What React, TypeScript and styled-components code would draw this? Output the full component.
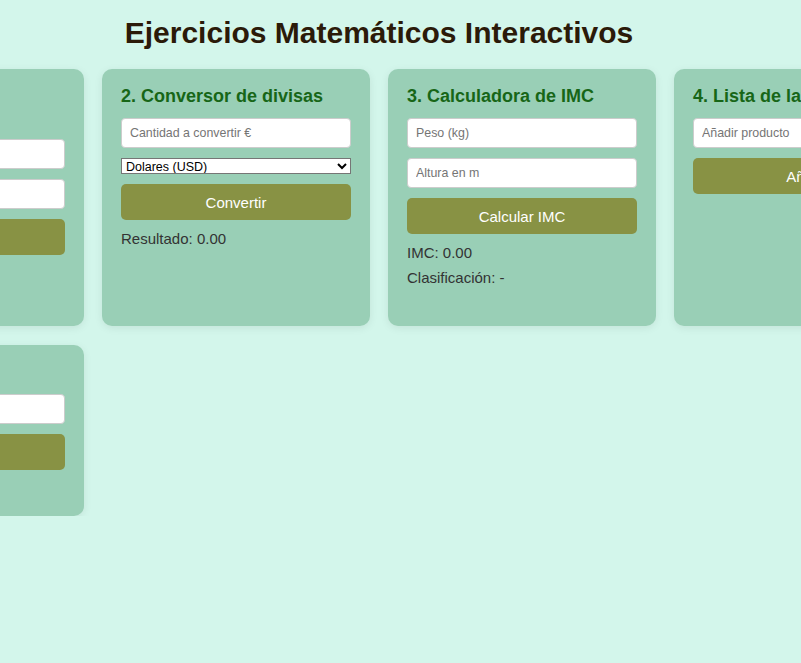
import * as React from 'react'
import styled, { createGlobalStyle } from 'styled-components'

const GlobalStyle = createGlobalStyle`
  body {
    margin: 0;
    background: #d3f6eb;
    font-family: "Liberation Sans", Arial, sans-serif;
    overflow: hidden;
  }
`

const App: React.FC = () => (
  <StyledPage>
    <GlobalStyle />
    <StyledHeading>Ejercicios Matemáticos Interactivos</StyledHeading>
    <StyledGrid>
      <StyledCard $minHeight={257}>
        <StyledCardTitle>1. Calculadora de porcentajes</StyledCardTitle>
        <StyledInput placeholder="Número" />
        <StyledInput placeholder="Porcentaje %" />
        <StyledButton>Calcular</StyledButton>
        <StyledResult>Resultado: 0.00</StyledResult>
      </StyledCard>

      <StyledCard>
        <StyledCardTitle>2. Conversor de divisas</StyledCardTitle>
        <StyledInput placeholder="Cantidad a convertir €" />
        <StyledSelect defaultValue="usd">
          <option value="usd">Dolares (USD)</option>
          <option value="gbp">Libras (GBP)</option>
          <option value="jpy">Yenes (JPY)</option>
        </StyledSelect>
        <StyledButton>Convertir</StyledButton>
        <StyledResult>Resultado: 0.00</StyledResult>
      </StyledCard>

      <StyledCard>
        <StyledCardTitle>3. Calculadora de IMC</StyledCardTitle>
        <StyledInput placeholder="Peso (kg)" />
        <StyledInput placeholder="Altura en m" />
        <StyledButton>Calcular IMC</StyledButton>
        <StyledResult>IMC: 0.00</StyledResult>
        <StyledResult>Clasificación: -</StyledResult>
      </StyledCard>

      <StyledCard>
        <StyledCardTitle>4. Lista de la compra</StyledCardTitle>
        <StyledInput placeholder="Añadir producto" />
        <StyledButton>Añadir</StyledButton>
      </StyledCard>

      <StyledCard $minHeight={171}>
        <StyledCardTitle>5. Par o impar</StyledCardTitle>
        <StyledInput placeholder="Número" />
        <StyledButton>Comprobar</StyledButton>
      </StyledCard>
    </StyledGrid>
  </StyledPage>
)

const StyledPage = styled.div`
  width: 758px;
  display: flex;
  flex-direction: column;
  align-items: center;
`

const StyledHeading = styled.h1`
  margin: 16px 0 18.5px;
  font-size: 30px;
  font-weight: bold;
  color: #2b1a09;
  white-space: nowrap;
`

const StyledGrid = styled.div`
  display: grid;
  grid-template-columns: repeat(4, 268px);
  column-gap: 18px;
  row-gap: 19px;
  align-items: stretch;
`

const StyledCard = styled.div<{ $minHeight?: number }>`
  box-sizing: border-box;
  min-height: ${props => (props.$minHeight ? `${props.$minHeight}px` : 'auto')};
  padding: 17.5px 19px 19px;
  background: #99cfb6;
  border-radius: 10px;
  box-shadow: 0 2px 8px rgba(0, 0, 0, 0.08);
`

const StyledCardTitle = styled.h3`
  margin: 0 0 11px;
  font-size: 18px;
  font-weight: bold;
  color: #176617;
`

const StyledInput = styled.input`
  display: block;
  box-sizing: border-box;
  width: 100%;
  height: 30px;
  margin: 0 0 10px;
  padding: 6px 8px;
  border: 1px solid #cccccc;
  border-radius: 4px;
  background: #ffffff;
  font-family: "Liberation Sans", Arial, sans-serif;
  font-size: 12.4px;
  color: #333333;

  &::placeholder {
    color: #757575;
  }
`

const StyledSelect = styled.select`
  display: block;
  box-sizing: border-box;
  width: 100%;
  height: 16px;
  margin: 0 0 10px;
  padding: 0;
  border: 1px solid #767676;
  border-radius: 0;
  background: #ffffff;
  font-family: "Liberation Sans", Arial, sans-serif;
  font-size: 12.5px;
  line-height: 14px;
  color: #000000;
`

const StyledButton = styled.button`
  display: block;
  box-sizing: border-box;
  width: 100%;
  height: 36px;
  margin: 0 0 10px;
  border: none;
  border-radius: 5px;
  background: #889244;
  color: #ffffff;
  font-family: "Liberation Sans", Arial, sans-serif;
  font-size: 15px;
  cursor: pointer;
`

const StyledResult = styled.p`
  margin: 8px 0;
  font-size: 15px;
  color: #333333;
`

export default App
